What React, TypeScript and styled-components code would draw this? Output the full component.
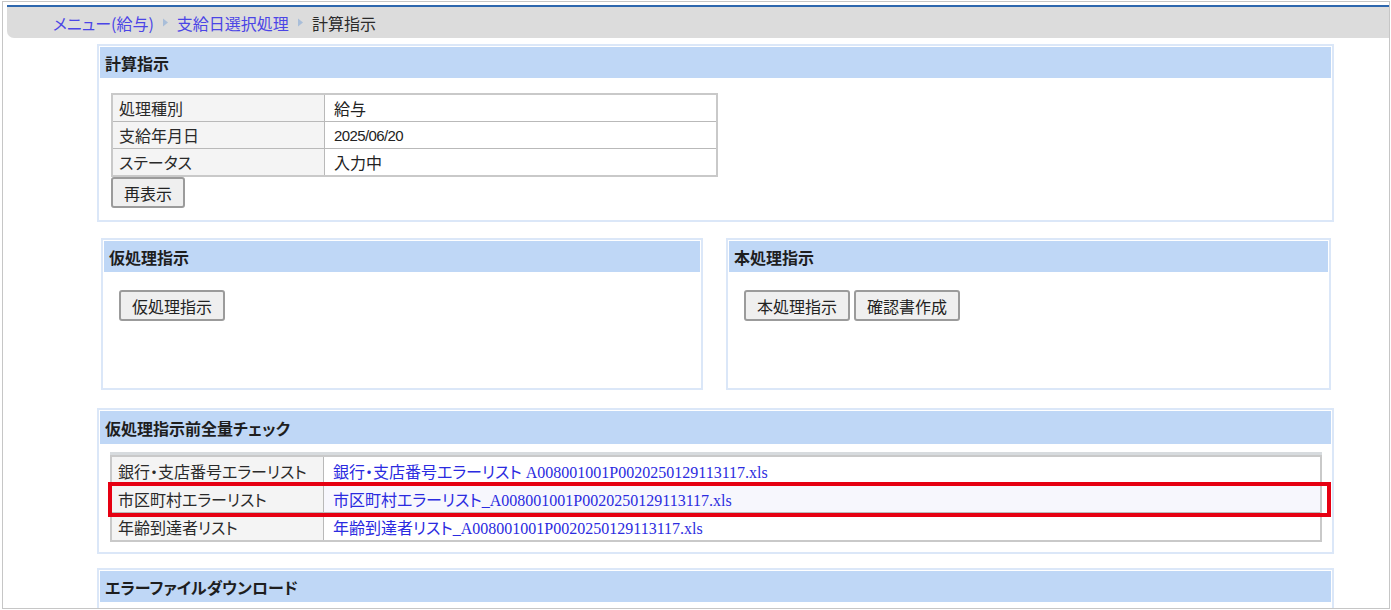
import styled, { createGlobalStyle } from "styled-components";

const GlobalStyle = createGlobalStyle`
  html, body {
    margin: 0;
    padding: 0;
    background: #ffffff;
  }
  body {
    font-family: "Noto Sans CJK JP", "Noto Sans", sans-serif;
    color: #222222;
  }
`;

const Frame = styled.div`
  box-sizing: border-box;
  height: 608px;
  margin: 1px 1px 1px 2px;
  border: 1px solid #c6c6c6;
  padding: 3px 0 0 4px;
  overflow: hidden;
`;

const TopLine = styled.div`
  height: 2px;
  background: #2d67ae;
`;

const Crumbs = styled.nav`
  height: 31px;
  background: #dcdcdc;
  border-bottom-left-radius: 7px;
  display: flex;
  align-items: center;
  gap: 8px;
  padding-left: 46px;
  font-size: 16px;
  font-feature-settings: "palt";
`;

const CrumbLink = styled.a`
  color: #4b45e6;
  text-decoration: none;
`;

const CrumbCurrent = styled.span`
  color: #2a2a2a;
`;

const Arrow = () => (
  <svg width="7" height="9" viewBox="0 0 7 9">
    <path d="M1 0.5 L6 4.5 L1 8.5 Z" fill="#a9bed9" />
  </svg>
);

const Content = styled.main`
  width: 1237px;
  padding: 6px 0 0 90px;
  display: flex;
  flex-direction: column;
`;

const Panel = styled.section<{ $height?: number; $gap?: number }>`
  box-sizing: border-box;
  border: 2px solid #dbe7f8;
  padding: 1px;
  margin-bottom: ${(p) => p.$gap ?? 0}px;
  height: ${(p) => (p.$height ? `${p.$height}px` : "auto")};
  background: #ffffff;
`;

const PanelHead = styled.h2<{ $tall?: boolean }>`
  margin: 0;
  height: ${(p) => (p.$tall ? 33 : 31)}px;
  display: flex;
  align-items: center;
  padding-left: 5px;
  background: #bfd7f6;
  font-size: 16px;
  font-weight: bold;
  color: #1e1e1e;
  font-feature-settings: "palt";
`;

const PanelBody = styled.div<{ $pad: string }>`
  padding: ${(p) => p.$pad};
`;

const Split = styled.div`
  display: grid;
  grid-template-columns: 602px 1fr;
  gap: 23px;
  padding: 0 3px 0 4px;
  margin-bottom: 18px;
`;

const Grid = styled.table<{ $width: number; $row: number }>`
  width: ${(p) => p.$width}px;
  border-collapse: collapse;
  border: 2px solid #c9c9c9;
  font-size: 16px;
  font-feature-settings: "palt";

  td {
    height: ${(p) => p.$row}px;
  }
`;

const Label = styled.td`
  width: 199px;
  padding: 0 6px;
  background: #f4f4f4;
  border: 1px solid #b9b9b9;
  color: #2a2a2a;
  white-space: nowrap;
`;

const Value = styled.td<{ $latin?: boolean }>`
  padding: 0 9px;
  border: 1px solid #b9b9b9;
  font-family: ${(p) =>
    p.$latin
      ? `"Liberation Sans", "Noto Sans CJK JP", sans-serif`
      : `"Noto Sans CJK JP", sans-serif`};
  font-size: ${(p) => (p.$latin ? 15 : 16)}px;
  letter-spacing: ${(p) => (p.$latin ? "-0.6px" : "normal")};
  white-space: nowrap;
`;

const Row = styled.tr<{ $shade?: boolean }>`
  background: ${(p) => (p.$shade ? "#f7f7fd" : "#ffffff")};
`;

const FileLink = styled.a`
  color: #2b2be0;
  text-decoration: none;
  font-family: "Liberation Serif", "Noto Sans CJK JP", serif;
  font-size: 16px;
`;

const Button = styled.button`
  height: 31px;
  padding: 0 11px;
  border: 2px solid #9b9b9b;
  border-radius: 3px;
  background: #efefef;
  font-family: "Noto Sans CJK JP", sans-serif;
  font-size: 16px;
  color: #222222;
  font-feature-settings: "palt";
`;

const Buttons = styled.div`
  display: flex;
  gap: 4px;
`;

const TableWrap = styled.div`
  position: relative;
  border-top: 3px solid #d7dbde;
`;

const Highlight = styled.div`
  position: absolute;
  left: -2px;
  top: 27px;
  width: 1223px;
  height: 35px;
  box-sizing: border-box;
  border: 4px solid #e60012;
  pointer-events: none;
`;

const summary = [
  { label: "処理種別", value: "給与" },
  { label: "支給年月日", value: "2025/06/20", latin: true },
  { label: "ステータス", value: "入力中" },
];

const checks = [
  { label: "銀行・支店番号エラーリスト", file: "銀行・支店番号エラーリスト A008001001P0020250129113117.xls" },
  { label: "市区町村エラーリスト", file: "市区町村エラーリスト_A008001001P0020250129113117.xls", shade: true },
  { label: "年齢到達者リスト", file: "年齢到達者リスト_A008001001P0020250129113117.xls" },
];

export default function App() {
  return (
    <>
      <GlobalStyle />
      <Frame>
        <TopLine />
        <Crumbs>
          <CrumbLink href="#">メニュー(給与)</CrumbLink>
          <Arrow />
          <CrumbLink href="#">支給日選択処理</CrumbLink>
          <Arrow />
          <CrumbCurrent>計算指示</CrumbCurrent>
        </Crumbs>

        <Content>
          <Panel $gap={16}>
            <PanelHead>計算指示</PanelHead>
            <PanelBody $pad="15px 11px 11px">
              <Grid $width={607} $row={26}>
                <tbody>
                  {summary.map((r) => (
                    <Row key={r.label}>
                      <Label>{r.label}</Label>
                      <Value $latin={r.latin}>{r.value}</Value>
                    </Row>
                  ))}
                </tbody>
              </Grid>
              <Button>再表示</Button>
            </PanelBody>
          </Panel>

          <Split>
            <Panel $height={152}>
              <PanelHead>仮処理指示</PanelHead>
              <PanelBody $pad="18px 15px">
                <Buttons>
                  <Button>仮処理指示</Button>
                </Buttons>
              </PanelBody>
            </Panel>
            <Panel $height={152}>
              <PanelHead>本処理指示</PanelHead>
              <PanelBody $pad="18px 15px">
                <Buttons>
                  <Button>本処理指示</Button>
                  <Button>確認書作成</Button>
                </Buttons>
              </PanelBody>
            </Panel>
          </Split>

          <Panel $gap={14}>
            <PanelHead $tall>仮処理指示前全量チェック</PanelHead>
            <PanelBody $pad="8px 9px 9px 10px">
              <TableWrap>
                <Grid $width={1212} $row={27}>
                  <tbody>
                    {checks.map((r) => (
                      <Row key={r.label} $shade={r.shade}>
                        <Label>{r.label}</Label>
                        <Value>
                          <FileLink href="#">{r.file}</FileLink>
                        </Value>
                      </Row>
                    ))}
                  </tbody>
                </Grid>
                <Highlight />
              </TableWrap>
            </PanelBody>
          </Panel>

          <Panel $height={60}>
            <PanelHead>エラーファイルダウンロード</PanelHead>
          </Panel>
        </Content>
      </Frame>
    </>
  );
}
